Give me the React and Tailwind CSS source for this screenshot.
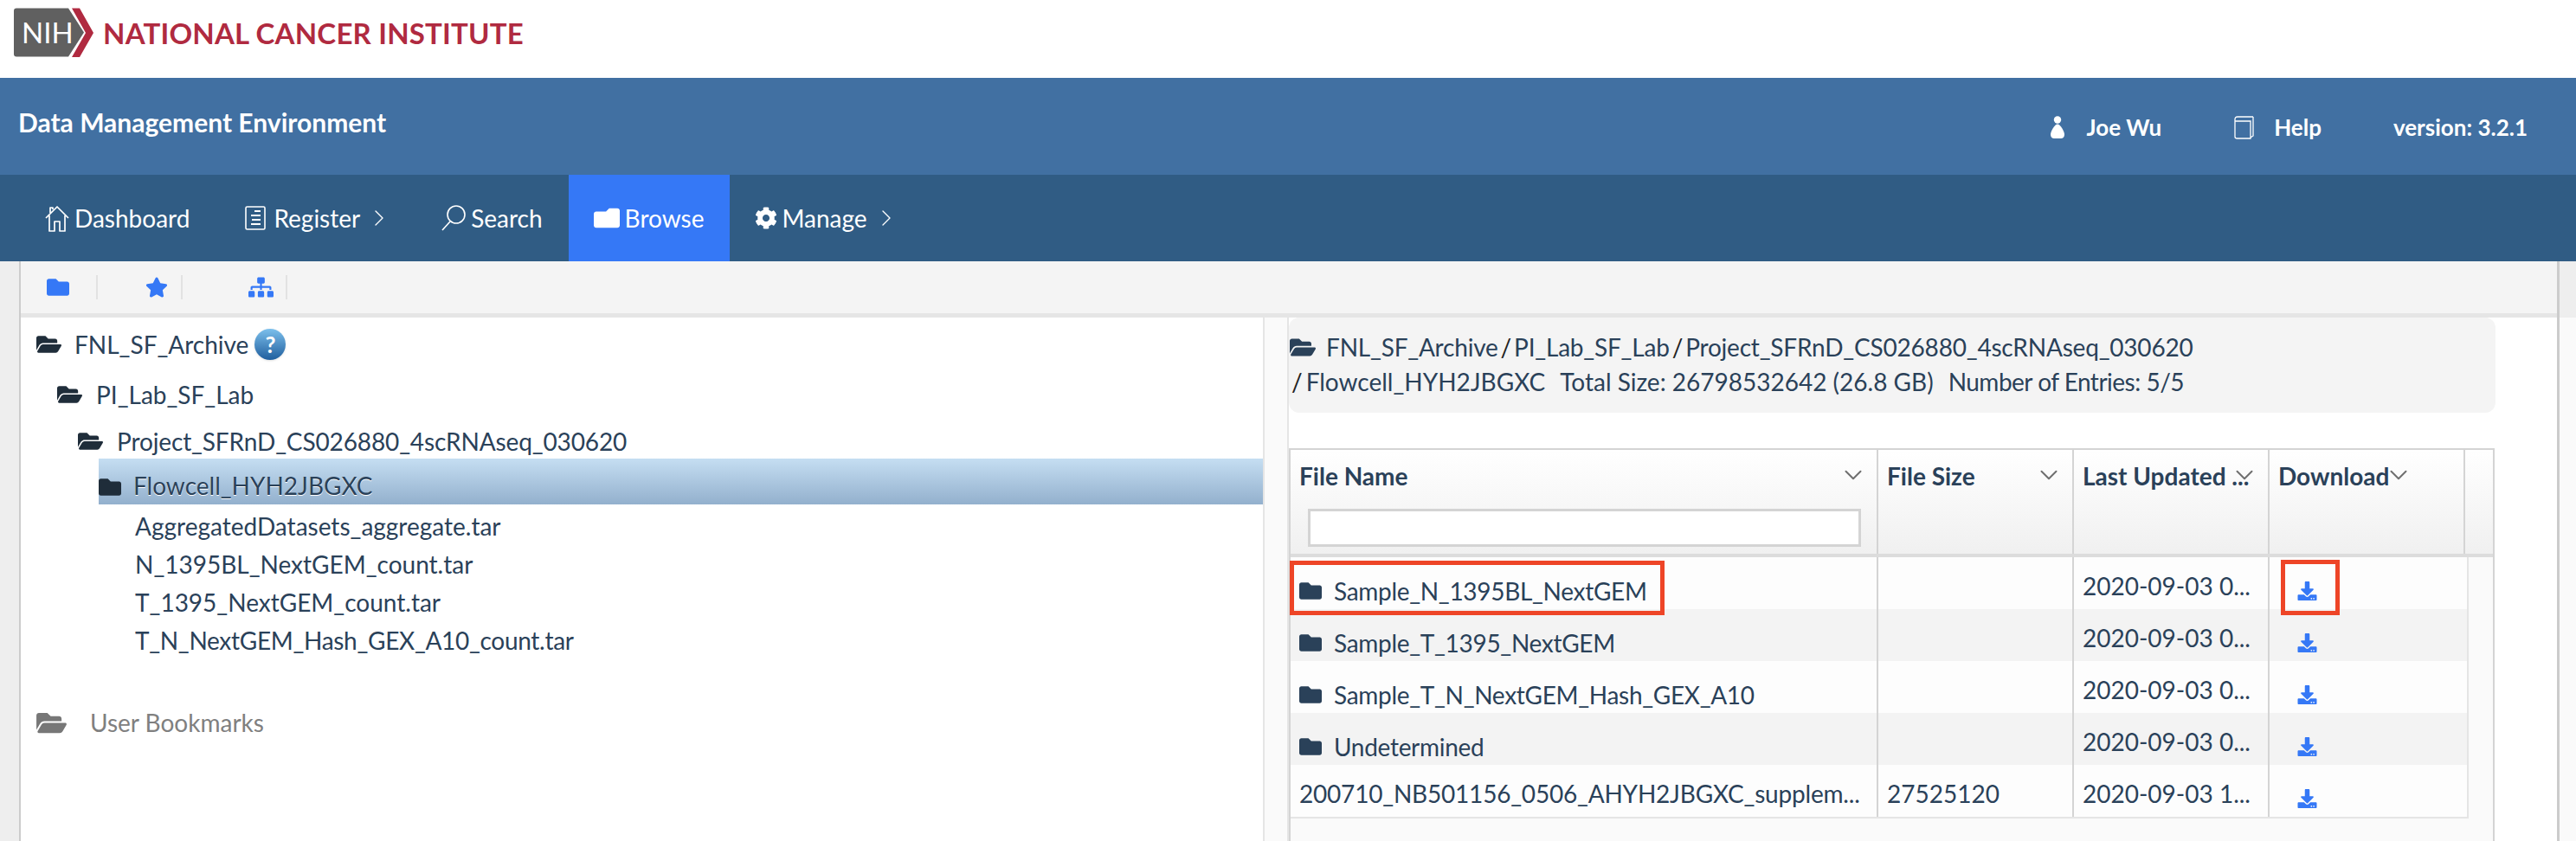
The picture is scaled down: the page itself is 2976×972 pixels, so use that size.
import React from 'react';
import { FaFolder, FaFolderOpen, FaStar, FaSitemap, FaCog, FaDownload } from 'react-icons/fa';
import { ChevronRight, ChevronDown } from 'lucide-react';

const HomeIcon = ({ className }) => (
  <svg viewBox="0 0 28 32" className={className} fill="none" stroke="currentColor" strokeWidth="1.7" strokeLinejoin="round">
    <path d="M1 16 14 3l13 13M6 10V4h3v2M5 13v18h6V20h6v11h6V13" />
  </svg>
);

const ListIcon = ({ className }) => (
  <svg viewBox="0 0 24 28" className={className} fill="none" stroke="currentColor" strokeWidth="1.6">
    <rect x="1" y="1" width="22" height="26" rx="1.500" />
    <path d="M11 6h7M7 11h11M8 16h10M7 21h11" strokeWidth="1.800" />
  </svg>
);

const SearchIcon = ({ className }) => (
  <svg viewBox="0 0 28 30" className={className} fill="none" stroke="currentColor" strokeWidth="1.6">
    <circle cx="17" cy="11" r="10" />
    <path d="M10 19 1 29" />
  </svg>
);

const PersonIcon = ({ className }) => (
  <svg viewBox="0 0 16 26" className={className} fill="currentColor">
    <circle cx="8" cy="4.500" r="4.200" />
    <path d="M8 9.500c3 0 8 8 8 12 0 3-2 4.500-4 4.500H4c-2 0-4-1.500-4-4.500 0-4 5-12 8-12z" />
  </svg>
);

const BookIcon = ({ className }) => (
  <svg viewBox="0 0 23 27" className={className} fill="none" stroke="currentColor" strokeWidth="1.3">
    <path d="M22 1H4C2 1 1 2 1 4v20c0 1.500 1 2 2.500 2H19V6H1.500M22 1v22l-3 2" />
  </svg>
);

const NihLogo = () => (
  <svg viewBox="0 0 92 58" className="w-[92px] h-[58px] shrink-0">
    <path d="M3 0.500h60l18 28-18 28H3q-3 0-3-3V3.500q0-3 3-3z" fill="#606060" />
    <path d="M67 0.500h9l16 28.500-16 28h-9l16-28z" fill="#b02a40" />
    <text x="9" y="41" fill="#ffffff" fontSize="33" fontFamily="Lato, sans-serif">NIH</text>
  </svg>
);

const HelpBubble = () => (
  <span className="w-9 h-9 rounded-full bg-gradient-to-b from-[#7cc0ec] to-[#1f5f9e] flex items-center justify-center text-white font-bold text-[26px] shadow-sm ml-[7px]">?</span>
);

const navItems = [
  { label: 'Dashboard', Icon: HomeIcon, iconClass: 'w-7 h-8', pad: 'pl-[22px] pr-[33px]' },
  { label: 'Register', Icon: ListIcon, iconClass: 'w-6 h-7 mr-[3px]', pad: 'pl-[31px] pr-[25px]', arrow: true },
  { label: 'Search', Icon: SearchIcon, iconClass: 'w-7 h-[30px]', pad: 'pl-[31px] pr-[30px]' },
  { label: 'Browse', Icon: FaFolder, iconClass: 'w-[30px] h-[30px] -scale-x-100', pad: 'pl-[29px] pr-[30px] bg-[#3578f6]' },
  { label: 'Manage', Icon: FaCog, iconClass: 'w-[26px] h-[26px] -mr-px', pad: 'pl-[29px] pr-[25px]', arrow: true },
];

const treeFiles = [
  { name: 'AggregatedDatasets_aggregate.tar', cls: '' },
  { name: 'N_1395BL_NextGEM_count.tar', cls: '' },
  { name: 'T_1395_NextGEM_count.tar', cls: '' },
  { name: 'T_N_NextGEM_Hash_GEX_A10_count.tar', cls: 'tracking-[-0.3px]' },
];

const rows = [
  { name: 'Sample_N_1395BL_NextGEM', folder: true, date: '2020-09-03 0...', marked: true },
  { name: 'Sample_T_1395_NextGEM', folder: true, date: '2020-09-03 0...' },
  { name: 'Sample_T_N_NextGEM_Hash_GEX_A10', folder: true, date: '2020-09-03 0...' },
  { name: 'Undetermined', folder: true, date: '2020-09-03 0...' },
  { name: '200710_NB501156_0506_AHYH2JBGXC_supplem...', size: '27525120', date: '2020-09-03 1...' },
];

const HeaderCell = ({ label, width, caretClass, children }) => (
  <div className={`${width} shrink-0 border-r-2 border-[#d4d4d4] relative px-[10px] pt-[11px] font-bold`}>
    <div className="h-[38px] leading-[38px] whitespace-nowrap">{label}</div>
    <ChevronDown className={`absolute top-[12px] w-[34px] h-[34px] text-[#6f6f6f] ${caretClass}`} strokeWidth={1.4} />
    {children}
  </div>
);

const TreeRow = ({ indent, children }) => (
  <div className={`flex items-center ${indent} whitespace-nowrap`}>{children}</div>
);

export default function App() {
  return (
    <div className="w-[2976px] h-[972px] overflow-hidden bg-white text-[#2a4159] text-[28px]" style={{ fontFamily: 'Lato, "Open Sans", sans-serif' }}>
      {/* logo */}
      <div className="h-[90px] flex items-start pt-[9px] pl-4 gap-[11px]">
        <NihLogo />
        <span className="text-[#b02a40] font-bold text-[33px] leading-[58px] tracking-[0.2px] whitespace-nowrap">NATIONAL CANCER INSTITUTE</span>
      </div>

      {/* title bar */}
      <div className="h-[112px] bg-[#4170a2] text-white flex items-center justify-between pl-[21px] pr-[56px]">
        <div className="font-bold text-[30px] leading-none mb-[10px]">Data Management Environment</div>
        <div className="flex items-center font-bold text-[26px] mt-[2px]">
          <PersonIcon className="w-4 h-[26px] mr-[26px]" />
          <span className="mr-[84px]">Joe Wu</span>
          <BookIcon className="w-[23px] h-[27px] mr-[23px]" />
          <span className="mr-[83px]">Help</span>
          <span>version: 3.2.1</span>
        </div>
      </div>

      {/* nav */}
      <div className="h-[100px] bg-[#305c84] text-white flex items-stretch pl-[30px]">
        {navItems.map(({ label, Icon, iconClass, arrow, pad }) => (
          <div key={label} className={`flex items-center gap-[6px] ${pad}`}>
            <Icon className={iconClass} />
            <span>{label}</span>
            {arrow && <ChevronRight className="w-8 h-8" strokeWidth={1} />}
          </div>
        ))}
      </div>

      <div className="flex h-[670px]">
        <div className="w-[22px] bg-[#eeeeee] shrink-0" />
        <div className="w-[2px] bg-[#cccccc] shrink-0" />

        <div className="w-[2930px] shrink-0">
          {/* toolbar */}
          <div className="h-[60px] bg-[#f4f4f4] border-b-[5px] border-[#e5e5e5] box-content flex items-center text-[#3578f6]">
            <div className="w-[89px] flex justify-end pr-[31px] h-7 items-center border-r-2 border-[#e2e2e2]"><FaFolder className="w-[26px] h-[26px]" /></div>
            <div className="w-[98px] flex justify-end pr-[15px] h-7 items-center border-r-2 border-[#e2e2e2]"><FaStar className="w-[26px] h-[26px]" /></div>
            <div className="w-[121px] flex justify-end pr-[14px] h-7 items-center border-r-2 border-[#e2e2e2]"><FaSitemap className="w-[29px] h-[26px]" /></div>
          </div>

          <div className="flex h-[605px]">
            {/* tree */}
            <div className="w-[1435px] shrink-0 pt-[11px] bg-white">
              <TreeRow indent="pl-[18px] h-[40px]">
                <FaFolderOpen className="w-[29px] h-[26px] text-[#1f2d3a] mr-[15px]" />
                <span>FNL_SF_Archive</span>
                <HelpBubble />
              </TreeRow>
              <TreeRow indent="pl-[42px] h-[40px] mt-[18px]">
                <FaFolderOpen className="w-[29px] h-[26px] text-[#1f2d3a] mr-[16px]" />
                <span>PI_Lab_SF_Lab</span>
              </TreeRow>
              <TreeRow indent="pl-[66px] h-[40px] mt-[14px]">
                <FaFolderOpen className="w-[29px] h-[26px] text-[#1f2d3a] mr-[16px]" />
                <span className="tracking-[-0.13px]">Project_SFRnD_CS026880_4scRNAseq_030620</span>
              </TreeRow>
              <div className="ml-[90px] h-[53px] bg-gradient-to-b from-[#c5def2] to-[#93b0cd] flex items-end pb-[1px] whitespace-nowrap [text-shadow:0_1px_0_#ffffff]">
                <FaFolder className="w-[26px] h-[26px] text-[#1f2d3a] mr-[14px] mb-[6px]" />
                <span>Flowcell_HYH2JBGXC</span>
              </div>
              <div className="pl-[132px] pt-[3px]">
                {treeFiles.map((f) => (
                  <div key={f.name} className={`h-[44px] leading-[44px] whitespace-nowrap ${f.cls}`}>{f.name}</div>
                ))}
              </div>
              <div className="flex items-center pl-[18px] mt-[52px] text-[#808080]">
                <FaFolderOpen className="w-[35px] h-[31px] text-[#777777] mr-[27px]" />
                <span>User Bookmarks</span>
              </div>
            </div>

            {/* splitter */}
            <div className="w-[30px] bg-[#fafafa] border-x-2 border-[#e5e5e5] shrink-0" />

            {/* detail pane */}
            <div className="w-[1394px] shrink-0">
              <div className="h-[110px] bg-[#f4f4f4] rounded-[12px] pt-[14px] leading-[40px] whitespace-nowrap">
                <div className="flex items-center pl-px tracking-[-0.2px]">
                  <FaFolderOpen className="w-[30px] h-[27px] text-[#2a4159] mr-[12px]" />
                  <span>FNL_SF_Archive</span><span className="text-[#222222] mx-[3px]">/</span>
                  <span>PI_Lab_SF_Lab</span><span className="text-[#222222] mx-[3px]">/</span>
                  <span>Project_SFRnD_CS026880_4scRNAseq_030620</span>
                </div>
                <div className="flex items-center pl-[3px]">
                  <span className="text-[#222222] mr-[4px]">/</span>
                  <span>Flowcell_HYH2JBGXC</span>
                  <span className="ml-[17px]">Total Size: 26798532642 (26.8 GB)</span>
                  <span className="ml-[17px] tracking-[-0.5px]">Number of Entries: 5/5</span>
                </div>
              </div>

              {/* table */}
              <div className="mt-[41px] h-[454px] w-[1393px] border-2 border-b-0 border-[#d4d4d4] bg-[#fafafa]">
                <div className="flex h-[120px] border-b-4 border-[#dcdcdc] box-content bg-gradient-to-b from-[#ffffff] to-[#f0f0f0]">
                  <HeaderCell label="File Name" width="w-[679px]" caretClass="right-[10px]">
                    <input className="block ml-[10px] mt-[19px] w-[639px] h-[44px] bg-white border-[3px] border-[#d4d4d4]" readOnly />
                  </HeaderCell>
                  <HeaderCell label="File Size" width="w-[226px]" caretClass="right-[10px]" />
                  <HeaderCell label="Last Updated ..." width="w-[226px]" caretClass="right-[10px]" />
                  <HeaderCell label="Download" width="w-[226px]" caretClass="right-[58px]" />
                </div>
                <div className="w-[1359px] border-r-2 border-b-2 border-[#e5e5e5] box-content">
                  {rows.map((r, i) => (
                    <div key={r.name} className={`relative flex h-[60px] ${i % 2 ? 'bg-[#f3f3f3]' : 'bg-[#fdfdfd]'}`}>
                      <div className={`w-[679px] shrink-0 border-r-2 border-[#d4d4d4] pl-[10px] flex whitespace-nowrap ${r.folder ? 'items-center pt-[18px] tracking-[-0.3px]' : 'pt-[12px] tracking-[-0.2px]'}`}>
                        {r.folder && <FaFolder className="w-[26px] h-[26px] text-[#2a4159] mr-[14px] shrink-0" />}
                        <span>{r.name}</span>
                      </div>
                      <div className="w-[226px] shrink-0 border-r-2 border-[#d4d4d4] pl-[10px] pt-[12px]">{r.size}</div>
                      <div className="w-[226px] shrink-0 border-r-2 border-[#d4d4d4] pl-[10px] pt-[12px] whitespace-nowrap">{r.date}</div>
                      <div className="flex-1 pl-[32px] pt-[28px] text-[#3578f6]">
                        <FaDownload className="w-[23px] h-[22px]" />
                      </div>
                      {/* annotation boxes drawn over the screenshot */}
                      {r.marked && (
                        <>
                          <div className="absolute z-10 left-[-1px] top-[4px] w-[433px] h-[63px] border-[5px] border-[#ee4527]" />
                          <div className="absolute z-10 left-[1144px] top-[3px] w-[68px] h-[64px] border-[5px] border-[#ee4527]" />
                        </>
                      )}
                    </div>
                  ))}
                </div>
              </div>
            </div>

            <div className="flex-1" />
          </div>
        </div>

        <div className="w-[3px] bg-[#cccccc] shrink-0" />
        <div className="flex-1 flex flex-col">
          <div className="h-[65px] bg-[#eeeeee]" />
          <div className="flex-1 bg-[#fafafa]" />
        </div>
      </div>
    </div>
  );
}
